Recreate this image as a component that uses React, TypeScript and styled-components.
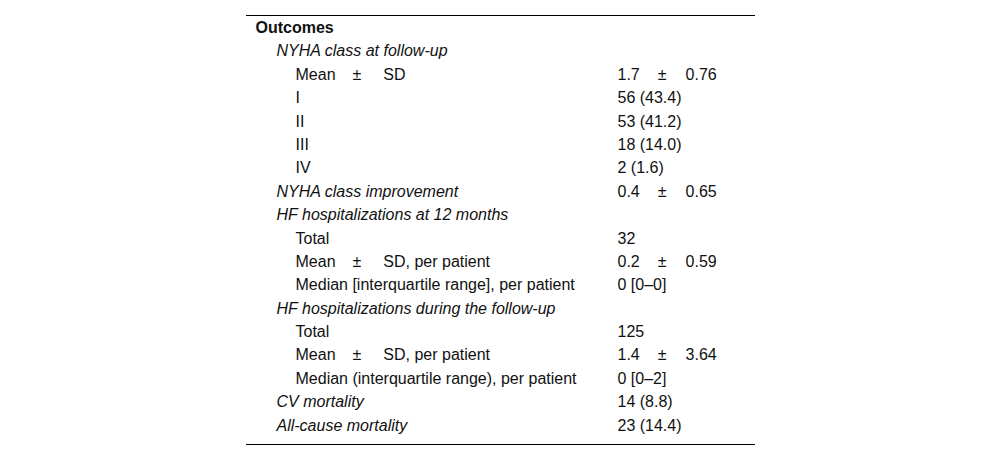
import React from "react";
import styled, { createGlobalStyle } from "styled-components";

const Global = createGlobalStyle`
  html, body { margin: 0; padding: 0; background: #fff; }
  body { font-family: "Liberation Sans", Arial, sans-serif; color: #111; }
`;

const Page = styled.div`
  width: 1000px;
  height: 459px;
  padding-top: 15px;
  box-sizing: border-box;
`;

const Table = styled.div`
  width: 509px;
  margin: 0 auto;
  border-top: 1px solid #000;
  border-bottom: 1px solid #000;
  display: grid;
  grid-template-columns: 372px 1fr;
  font-size: 16px;
  padding-bottom: 7px;
`;

const Label = styled.div<{ $level: number; $kind: "head" | "group" | "item" }>`
  padding-left: ${(p) => [10, 31, 50][p.$level]}px;
  height: 23.4px;
  line-height: 23.4px;
  white-space: nowrap;
  font-weight: ${(p) => (p.$kind === "head" ? 700 : 400)};
  font-style: ${(p) => (p.$kind === "group" ? "italic" : "normal")};
`;

const Value = styled.div`
  height: 23.4px;
  line-height: 23.4px;
  white-space: nowrap;
`;

const Pm = styled.span<{ $left: number; $right: number }>`
  margin-left: ${(p) => p.$left}px;
  margin-right: ${(p) => p.$right}px;
`;

type Row = { label: React.ReactNode; value?: React.ReactNode; level: number; kind: "head" | "group" | "item" };

const meanSd = (tail: string) => (
  <>
    Mean<Pm $left={17} $right={22}>±</Pm>SD{tail}
  </>
);
const pmVal = (a: string, b: string) => (
  <>
    {a}<Pm $left={18} $right={19}>±</Pm>{b}
  </>
);

const rows: Row[] = [
  { label: "Outcomes", level: 0, kind: "head" },
  { label: "NYHA class at follow-up", level: 1, kind: "group" },
  { label: meanSd(""), value: pmVal("1.7", "0.76"), level: 2, kind: "item" },
  { label: "I", value: "56 (43.4)", level: 2, kind: "item" },
  { label: "II", value: "53 (41.2)", level: 2, kind: "item" },
  { label: "III", value: "18 (14.0)", level: 2, kind: "item" },
  { label: "IV", value: "2 (1.6)", level: 2, kind: "item" },
  { label: "NYHA class improvement", value: pmVal("0.4", "0.65"), level: 1, kind: "group" },
  { label: "HF hospitalizations at 12 months", level: 1, kind: "group" },
  { label: "Total", value: "32", level: 2, kind: "item" },
  { label: meanSd(", per patient"), value: pmVal("0.2", "0.59"), level: 2, kind: "item" },
  { label: "Median [interquartile range], per patient", value: "0 [0–0]", level: 2, kind: "item" },
  { label: "HF hospitalizations during the follow-up", level: 1, kind: "group" },
  { label: "Total", value: "125", level: 2, kind: "item" },
  { label: meanSd(", per patient"), value: pmVal("1.4", "3.64"), level: 2, kind: "item" },
  { label: "Median (interquartile range), per patient", value: "0 [0–2]", level: 2, kind: "item" },
  { label: "CV mortality", value: "14 (8.8)", level: 1, kind: "group" },
  { label: "All-cause mortality", value: "23 (14.4)", level: 1, kind: "group" },
];

export default function App() {
  return (
    <Page>
      <Global />
      <Table>
        {rows.map((r, i) => (
          <React.Fragment key={i}>
            <Label $level={r.level} $kind={r.kind}>{r.label}</Label>
            <Value>{r.value}</Value>
          </React.Fragment>
        ))}
      </Table>
    </Page>
  );
}
